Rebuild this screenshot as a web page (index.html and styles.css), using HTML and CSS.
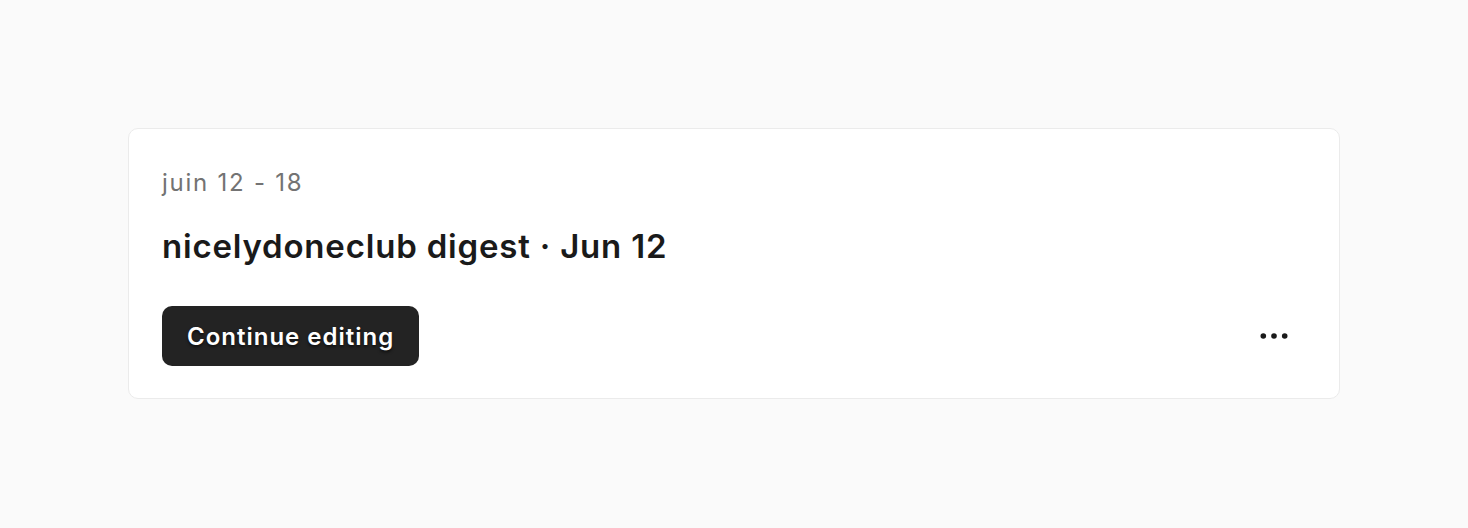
FILE: index.html
```html
<!DOCTYPE html>
<html>
<head>
<meta charset="utf-8">
<link rel="stylesheet" href="styles.css">
</head>
<body>
<div class="page">
  <div class="card">
    <div class="date">juin 12 - 18</div>
    <div class="title">nicelydoneclub digest · Jun 12</div>
    <div class="actions">
      <button class="btn">Continue editing</button>
      <button class="more" aria-label="More">
        <svg width="28" height="8" viewBox="0 0 28 8"><circle cx="3.3" cy="4" r="2.8" fill="#1a1a1a"/><circle cx="14" cy="4" r="2.8" fill="#1a1a1a"/><circle cx="24.7" cy="4" r="2.8" fill="#1a1a1a"/></svg>
      </button>
    </div>
  </div>
</div>
</body>
</html>
```
FILE: styles.css
```css
html, body {
  margin: 0;
  padding: 0;
  background: #fafafa;
  font-family: Inter, "Noto Sans", sans-serif;
}
.page {
  padding: 128px 128px 0 128px;
}
.card {
  background: #fff;
  border: 1px solid #ebebeb;
  border-radius: 10px;
  padding: 33px 33px 32px 33px;
  height: 271px;
  box-sizing: border-box;
  display: flex;
  flex-direction: column;
}
.date {
  font-size: 24px;
  letter-spacing: 1.75px;
  line-height: 42px;
  color: #737373;
}
.title {
  margin-top: 21px;
  font-size: 33px;
  letter-spacing: 0.8px;
  line-height: 42px;
  font-weight: 600;
  color: #1a1a1a;
}
.actions {
  margin-top: auto;
  display: flex;
  align-items: center;
  justify-content: space-between;
}
.btn {
  height: 60px;
  padding: 0 25px 0 25px;
  border: none;
  border-radius: 10px;
  background: #232323;
  color: #fff;
  font-family: inherit;
  font-size: 24px;
  letter-spacing: 1px;
  font-weight: 600;
  text-shadow: 0 2px 3px rgba(0,0,0,0.6);
  cursor: pointer;
}
.more {
  border: none;
  background: none;
  padding: 10px;
  margin-right: 8px;
  display: flex;
}
```
